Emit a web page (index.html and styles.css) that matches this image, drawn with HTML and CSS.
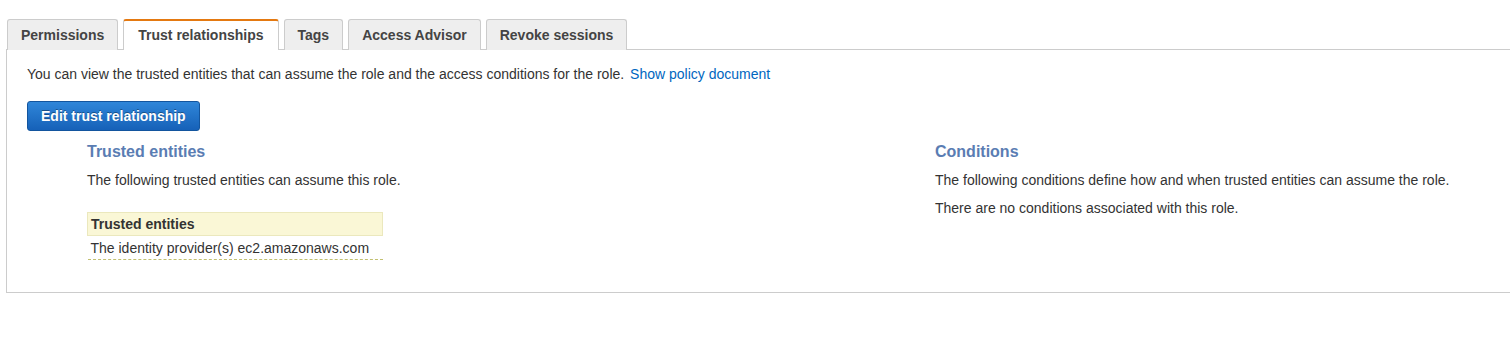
FILE: index.html
```html
<!DOCTYPE html>
<html lang="en">
<head>
  <meta charset="UTF-8">
  <title>Role - Trust relationships</title>
  <link rel="stylesheet" href="styles.css">
</head>
<body>
  <div class="role-detail">
    <!-- Tabs -->
    <ul class="tabs">
      <li class="tab">Permissions</li>
      <li class="tab active">Trust relationships</li>
      <li class="tab">Tags</li>
      <li class="tab">Access Advisor</li>
      <li class="tab">Revoke sessions</li>
    </ul>

    <!-- Tab panel -->
    <div class="panel">
      <p class="intro">You can view the trusted entities that can assume the role and the access conditions for the role. <a href="#" class="link">Show policy document</a></p>
      <button class="btn-primary" type="button">Edit trust relationship</button>

      <div class="columns">
        <div class="column">
          <h3 class="section-title">Trusted entities</h3>
          <p class="section-text">The following trusted entities can assume this role.</p>
          <table class="entities">
            <thead>
              <tr><th>Trusted entities</th></tr>
            </thead>
            <tbody>
              <tr><td>The identity provider(s) ec2.amazonaws.com</td></tr>
            </tbody>
          </table>
        </div>
        <div class="column">
          <h3 class="section-title">Conditions</h3>
          <p class="section-text">The following conditions define how and when trusted entities can assume the role.</p>
          <p class="section-text">There are no conditions associated with this role.</p>
        </div>
      </div>
    </div>
  </div>
</body>
</html>
```

FILE: styles.css
```css
* {
  margin: 0;
  padding: 0;
  box-sizing: border-box;
}

body {
  font-family: "Liberation Sans", Arial, Helvetica, sans-serif;
  font-size: 14px;
  color: #333;
  background-color: #fff;
  overflow: hidden;
}

.role-detail {
  padding: 19px 0 0 6px;
}

/* Tabs */
.tabs {
  list-style: none;
  display: flex;
  gap: 5px;
  padding-left: 1px;
  position: relative;
  z-index: 1;
}

.tab {
  height: 31px;
  padding: 0 13px;
  line-height: 30px;
  font-weight: bold;
  color: #444;
  background-color: #eee;
  border: 1px solid #ccc;
  border-bottom: none;
  border-radius: 3px 3px 0 0;
  cursor: pointer;
}

.tab.active {
  background-color: #fff;
  border-top: 2px solid #e47911;
  line-height: 29px;
  padding: 0 14px;
}

/* Panel */
.panel {
  margin-top: -1px;
  margin-right: -10px;
  height: 244px;
  border: 1px solid #ccc;
  padding: 14px 20px 0 20px;
}

.intro {
  line-height: 20px;
}

.link {
  color: #0066c0;
  text-decoration: none;
  margin-left: 2px;
}

.btn-primary {
  margin-top: 17px;
  height: 30px;
  padding: 0 13px;
  font-family: inherit;
  font-size: 14px;
  font-weight: bold;
  color: #fff;
  text-shadow: 0 -1px 0 rgba(0, 0, 0, 0.35);
  background: linear-gradient(#2f86d9, #1661b8);
  border: 1px solid #13559e;
  border-radius: 3px;
}

/* Columns */
.columns {
  display: grid;
  grid-template-columns: 848px 1fr;
  margin: 11px 0 0 60px;
}

.section-title {
  font-size: 16px;
  font-weight: bold;
  color: #5a7db3;
  line-height: 20px;
}

.section-text {
  margin-top: 8px;
  line-height: 20px;
}

.section-text + .section-text {
  margin-top: 8px;
}

/* Entities table */
.entities {
  margin-top: 22px;
  width: 296px;
  border-collapse: collapse;
}

.entities th {
  text-align: left;
  font-weight: bold;
  color: #333;
  background-color: #faf7d6;
  border: 1px solid #ebe8bd;
  padding: 0 3px;
  height: 23px;
}

.entities td {
  padding: 0 3px;
  height: 24px;
  border-bottom: 1px dashed #c2c070;
}
```
